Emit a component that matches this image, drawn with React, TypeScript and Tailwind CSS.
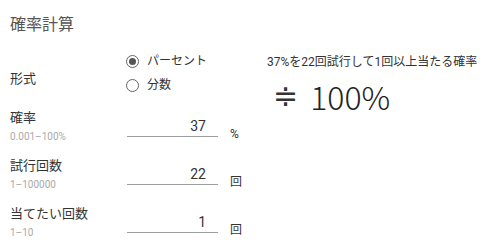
import React, { useState } from 'react';

const font = { fontFamily: 'Roboto, "Noto Sans CJK JP", sans-serif' };

function Field({ label, hint, value, unit }: { label: string; hint: string; value: string; unit: string }) {
  return (
    <div className="flex h-12 items-start">
      <div className="w-[117px]">
        <div className="text-[13px] leading-[18px] text-[#333]">{label}</div>
        <div className="mt-[4px] text-[10px] leading-[12px] text-[#aaa]">{hint}</div>
      </div>
      <div className="w-[91px] border-b border-[#9e9e9e] pt-[8px] pb-[1px] text-right text-[14px] leading-[18px] text-[#333]">
        <span className="pr-[12px]">{value}</span>
      </div>
      <div className="ml-[12px] pt-[17px] text-[12px] leading-[16px] text-[#333]">{unit}</div>
    </div>
  );
}

export default function App() {
  const [mode, setMode] = useState('percent');
  return (
    <div className="flex h-[248px] w-[480px] bg-white" style={font}>
      <div className="w-[267px] pl-[10px]">
        <h1 className="pt-[13px] text-[16px] leading-[24px] text-[#555] font-normal">確率計算</h1>
        <div className="mt-[14px] flex h-[56px]">
          <div className="w-[116px] flex items-center text-[13px] text-[#333]">形式</div>
          <div className="flex flex-col gap-[8px] pt-[2px]">
            {[
              ['percent', 'パーセント'],
              ['fraction', '分数'],
            ].map(([k, t]) => (
              <label key={k} className="flex items-center gap-[8px] text-[12px] leading-[16px] text-[#333] cursor-pointer" onClick={() => setMode(k)}>
                <span className="flex h-[13px] w-[13px] items-center justify-center rounded-full border-[1.5px] border-[#666]">
                  {mode === k && <span className="h-[7px] w-[7px] rounded-full bg-[#555]" />}
                </span>
                {t}
              </label>
            ))}
          </div>
        </div>
        <div className="mt-[2px]">
          <Field label="確率" hint="0.001–100%" value="37" unit="%" />
          <Field label="試行回数" hint="1–100000" value="22" unit="回" />
          <Field label="当てたい回数" hint="1–10" value="1" unit="回" />
        </div>
      </div>
      <div className="pt-[54px]">
        <div className="text-[12px] leading-[16px] text-[#333]">37%を22回試行して1回以上当たる確率</div>
        <div className="mt-[6px] flex items-center pl-[6px] text-[32px] leading-[40px] text-[#222]">
          <span className="text-[30px] text-[#333]" style={{ fontFamily: '"DejaVu Sans", sans-serif' }}>≑</span>
          <span className="ml-[12px] font-light" style={{ fontFamily: '"Noto Sans CJK JP", sans-serif' }}>100%</span>
        </div>
      </div>
    </div>
  );
}
